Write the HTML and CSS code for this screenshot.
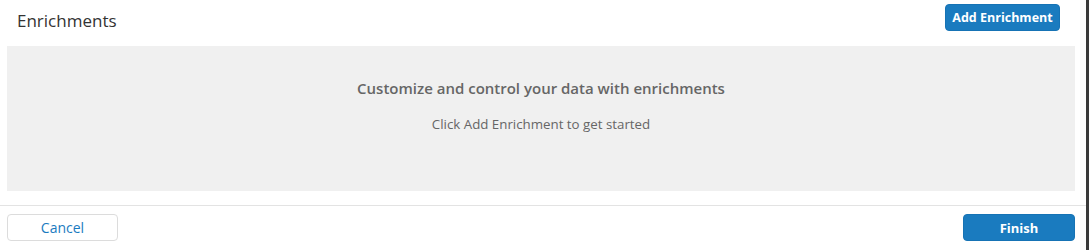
FILE: index.html
```html
<!DOCTYPE html>
<html>
<head>
<meta charset="utf-8">
<link rel="stylesheet" href="styles.css">
</head>
<body>
<div class="frame">
  <div class="header">
    <div class="title">Enrichments</div>
    <button class="btn btn-primary btn-add">Add Enrichment</button>
  </div>
  <div class="panel">
    <div class="panel-title">Customize and control your data with enrichments</div>
    <div class="panel-sub">Click Add Enrichment to get started</div>
  </div>
  <div class="footer">
    <button class="btn btn-secondary btn-foot">Cancel</button>
    <button class="btn btn-primary btn-foot btn-finish">Finish</button>
  </div>
</div>
</body>
</html>
```

FILE: styles.css
```css
html, body {
  margin: 0;
  padding: 0;
  background: #ffffff;
}
body {
  font-family: "Open Sans", "Liberation Sans", sans-serif;
}
.frame {
  width: 1089px;
  height: 250px;
  box-sizing: border-box;
  border-right: 3px solid #3a3a3a;
  display: flex;
  flex-direction: column;
}
.header {
  height: 46px;
  box-sizing: border-box;
  padding: 4px 26px 0 17px;
  display: flex;
  justify-content: space-between;
  align-items: flex-start;
}
.title {
  font-size: 17px;
  color: #333333;
  line-height: 20px;
  margin-top: 7px;
}
.btn {
  font-family: "Open Sans", "Liberation Sans", sans-serif;
  font-size: 12.5px;
  border-radius: 4px;
  cursor: pointer;
  padding: 0;
}
.btn-primary {
  background: #1a7bbf;
  border: 1px solid #1673b5;
  color: #ffffff;
  font-weight: 700;
}
.btn-secondary {
  background: #ffffff;
  border: 1px solid #dcdcdc;
  color: #1a7bbf;
  font-size: 14px;
  font-weight: 400;
}
.btn-add {
  width: 115px;
  height: 27px;
}
.panel {
  margin: 0 11px 0 7px;
  height: 145px;
  background: #f0f0f0;
  display: flex;
  flex-direction: column;
  align-items: center;
  box-sizing: border-box;
  padding-top: 32px;
}
.panel-title {
  font-size: 15px;
  font-weight: 600;
  color: #666666;
  line-height: 20px;
}
.panel-sub {
  font-size: 13.3px;
  color: #666666;
  line-height: 18px;
  margin-top: 17px;
}
.footer {
  margin-top: 14px;
  border-top: 1px solid #e3e3e3;
  padding: 8px 11px 0 7px;
  display: flex;
  justify-content: space-between;
}
.btn-foot {
  width: 111px;
  height: 27px;
}
.btn-finish {
  width: 112px;
  font-size: 13px;
}
```
